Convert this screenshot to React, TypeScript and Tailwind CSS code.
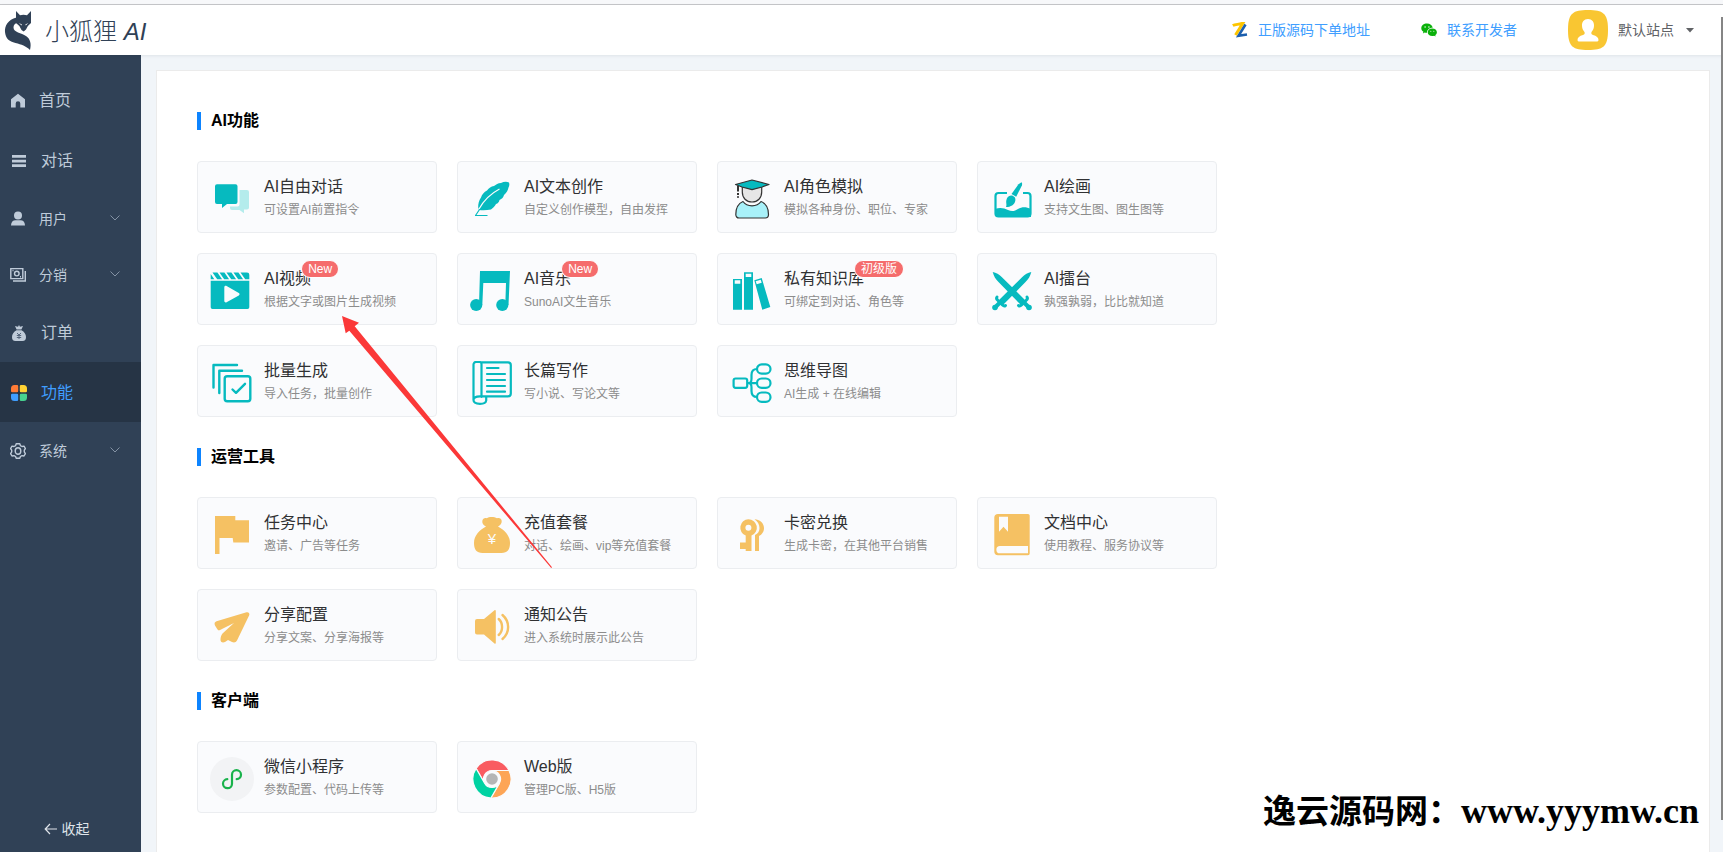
import type { ReactNode } from "react";
import clsx from "clsx";

type Feature = {
  title: string;
  desc: string;
  icon: ReactNode;
  badge?: string;
};

const TEAL = "#06babf";
const AMBER = "#f5c163";
const CARD = "#fafbfd";

/* ---------- Card icons (44 x 44) ---------- */

const Icon = ({ children }: { children: ReactNode }) => (
  <svg viewBox="0 0 44 44" className="size-11" fill="none" aria-hidden="true">
    {children}
  </svg>
);

const ChatIcon = () => (
  <Icon>
    <path
      d="M29.500 13h7.500a2 2 0 0 1 2 2v15.500a2 2 0 0 1-2 2h-3v3.800l-4.500-3.300h-7.500a2 2 0 0 1-2-2v-1.500h7.500a2 2 0 0 0 2-2z"
      fill="#b4ecec"
    />
    <path
      d="M7 7.300h18.500a2 2 0 0 1 2 2V25a2 2 0 0 1-2 2H17l-5 4v-4H7a2 2 0 0 1-2-2V9.300a2 2 0 0 1 2-2z"
      fill={TEAL}
    />
  </Icon>
);

const QuillIcon = () => (
  <Icon>
    <path
      d="M39 5.500c-2.500-1.300-5.500-.8-8 .5-3 .2-5 1.500-7 3-3 .5-5 2-7 4.500-3 1.500-5 4-6 7-2 3-3 6.500-2.800 10l.8 2.500c4 .3 8 .3 12-.5 2-1.500 4-3.500 5-5.500 2-.5 3-2 3.500-4 2.500-1 4-3 4.500-5 2.500-2.500 4-4.500 4.500-7.500 1-1.500 1-3.500.5-5z"
      fill={TEAL}
    />
    <path d="M9 32C14 23 20 17 29.500 12" stroke={CARD} strokeWidth="1.200" />
    <path d="M5.500 38.500 9.500 32.500M5 38.500h12.500" stroke={TEAL} strokeWidth="1.200" />
  </Icon>
);

const GraduateIcon = () => (
  <Icon>
    <g stroke="#333" strokeWidth="1.200" strokeLinejoin="round">
      <path d="M12.300 9v6c0 6 4 10 9.700 10s9.700-4 9.700-10V9z" fill="#e6e6e6" />
      <path
        d="M13 24.500c2 2.800 5 4.300 9 4.300s7-1.500 9-4.300c5 2 7.500 7 7.500 13 0 2-1.200 3.500-3.200 3.500H9c-2 0-3.200-1.500-3.200-3.500 0-6 2.500-11 7.200-13z"
        fill="#a8f1f9"
      />
      <path d="M5.500 7.500 22 3l17 4.500-7 2.500-10 2.700L12 10z" fill={TEAL} />
    </g>
    <path d="M8 9v5.500M8 16v2M8 19.200v1.500" stroke="#333" strokeWidth="2" />
  </Icon>
);

const PaintIcon = () => (
  <Icon>
    <path
      d="M17 16H8.500A3 3 0 0 0 5.500 19v17.500a3 3 0 0 0 3 3h29a3 3 0 0 0 3-3V19a3 3 0 0 0-3-3H33"
      stroke={TEAL}
      strokeWidth="2.200"
    />
    <path d="M5 32c5-2 9-1 13 1 4 2 7 1 10-1 4-2.500 8-2.500 13 0v8H6z" fill={TEAL} />
    <path d="M31.500 5.300c1 1 .7 2.500 0 4l-5.300 10.500-4.700-2.800 7-9.700z" fill={TEAL} />
    <path d="M21 18.500c3 0 5 2.500 4.300 5.200-.8 4-4.500 6.300-9.300 6.300 1-2 0-3.500.2-6 .4-3.300 2.300-5.500 4.800-5.500z" fill={TEAL} />
  </Icon>
);

const VideoIcon = () => (
  <Icon>
    <path
      fillRule="evenodd"
      d="M.7 11.700h38.600v26.500a1.800 1.800 0 0 1-1.800 1.800h-35A1.800 1.800 0 0 1 .7 38.200zM14.300 18.200v13.800c0 1.200 1.200 1.800 2.300 1.200L28.800 26.500c1-.6 1-1.800 0-2.400L16.600 17c-1.100-.6-2.300 0-2.300 1.200z"
      fill={TEAL}
    />
    <path
      d="M.7 10.300V5l3.600 5.300zM2.500 3.500h4.900l4.700 6.800H7.200zM9.500 3.500h4.900l4.700 6.800h-4.900zM16.500 3.500h4.900l4.700 6.800h-4.900zM23.500 3.500h4.900l4.700 6.800h-4.900zM30.500 3.500h6.500a2.300 2.300 0 0 1 2.300 2.300v4.500h-4.100z"
      fill={TEAL}
    />
  </Icon>
);

const MusicIcon = () => (
  <Icon>
    <path d="M10 2h30l-1.500 34h-3.200L36 14H13.300L12.300 36H9z" fill={TEAL} />
    <circle cx="6.200" cy="36" r="6.100" fill={TEAL} />
    <circle cx="32.300" cy="36" r="6.100" fill={TEAL} />
  </Icon>
);

const BooksIcon = () => (
  <Icon>
    <path d="M3 10h9v30.700H3zM14 3.300h9v37.400h-9zM24.300 11.300 31.700 9l8.600 29-8 2.700z" fill={TEAL} />
    <path
      d="M4.700 11.300h5.600v3.400H4.700zM15.700 4.700h5.600V8h-5.600zM25.700 12.300l5-1.600 1 3-5 1.600z"
      fill={CARD}
    />
  </Icon>
);

const Sword = () => (
  <>
    <path d="M2.700 3c3.500.8 6.500 2.300 9 5L36 32l-4.500 4.500L8.500 13C5.500 10 3.700 7 2.700 3z" fill={TEAL} />
    <path d="M28.500 36.500c1 .8 2 .5 3-.5l5-5c1-1 1.200-2 .5-3" stroke={TEAL} strokeWidth="3" strokeLinecap="round" />
    <path d="m34 33.500 5 5" stroke={TEAL} strokeWidth="4" strokeLinecap="round" />
    <circle cx="39" cy="38.500" r="2.800" fill={TEAL} />
  </>
);

const SwordsIcon = () => (
  <Icon>
    <Sword />
    <g transform="matrix(-1 0 0 1 44 0)">
      <Sword />
    </g>
  </Icon>
);

const BatchIcon = () => (
  <Icon>
    <g stroke={TEAL} strokeWidth="2.400" strokeLinecap="round" strokeLinejoin="round">
      <path d="M3.500 26.500V4h23.500M9.300 32V9.700H32" />
      <rect x="14.700" y="15.300" width="25.600" height="25" rx="2.500" />
      <path d="m22.500 28.500 3.500 3.300 9-9" />
    </g>
  </Icon>
);

const ScrollIcon = () => (
  <Icon>
    <g stroke={TEAL} strokeWidth="2.200" strokeLinecap="round" strokeLinejoin="round">
      <path d="M11.500 36V3a2 2 0 0 0-2-2H6a2.500 2.500 0 0 0-2.500 2.500V39M11.500 1.300H38a2.800 2.800 0 0 1 2.800 2.700v28.500a2.800 2.800 0 0 1-2.800 2.800H10c-4 0-6.500 1.500-6.500 3.800 0 2.400 2.500 3.700 6.500 3.700 4.500 0 6-1.300 6.200-3.300V36" />
      <path d="M17 7h11.500M17 13h18M17 19h18M17 25h18M17 30.700h18" />
    </g>
  </Icon>
);

const MindMapIcon = () => (
  <Icon>
    <g stroke={TEAL} strokeWidth="2.200">
      <rect x="3.600" y="17.500" width="13.600" height="9.300" rx="2" />
      <rect x="27" y="3.300" width="13.500" height="9.400" rx="4.700" />
      <rect x="27" y="17.500" width="13.500" height="9.300" rx="4.700" />
      <rect x="27" y="31.500" width="13.500" height="9.400" rx="4.700" />
      <path d="M17 22.100h10M27 8c-3.500 0-5.500 2.500-5.500 6v3.500c0 2.500-1 4.500-2.500 4.600 1.500.1 2.500 2 2.500 4.500V30c0 3.500 2 6 5.500 6" />
    </g>
  </Icon>
);

const FlagIcon = () => (
  <Icon>
    <path d="M5 3h20.300v4.200H39v22.300H23.300l-.6-4.500H9.500v16H5z" fill={AMBER} />
  </Icon>
);

const MoneyBagIcon = () => (
  <Icon>
    <path
      d="M16 13.500c-2.500-1-4-3-3.700-5.500.3-2.300 2.500-3.500 4.500-2.700 2-1.800 7.500-1.800 10.200 0 2.500-.8 4.500.4 4.700 2.700.2 2.500-1.500 4.500-3.700 5.500 6.500 3.500 12 9 12 16.500 0 6.500-2.500 10-8.500 10h-19C6.500 40 4 36.500 4 30c0-7.500 5.500-13 12-16.500z"
      fill={AMBER}
    />
    <text x="22" y="31" textAnchor="middle" fontSize="15" fill={CARD}>
      ¥
    </text>
  </Icon>
);

const KeysIcon = () => (
  <Icon>
    <path d="M24.500 6.200c5 0 9.500 3.800 9.500 9 0 3.300-2 6.300-5 7.800V38h-4V22c3-1.200 4.500-4 4.500-7 0-3.500-2-6.800-5-8.800z" fill={AMBER} />
    <path
      fillRule="evenodd"
      d="M18.400 6.200a8.500 8.500 0 0 1 3.100 16.400V38h-5.800v-2H10v-6.500h5.700v-6.900A8.500 8.500 0 0 1 18.400 6.200zm0 5.600a3 3 0 1 0 0 6 3 3 0 0 0 0-6z"
      fill={AMBER}
    />
  </Icon>
);

const DocIcon = () => (
  <Icon>
    <path d="M8 1h30a1.700 1.700 0 0 1 1.700 1.600v38a1.700 1.700 0 0 1-1.700 1.700H8a3.700 3.700 0 0 1-3.700-3.700v-34A3.700 3.700 0 0 1 8 1z" fill={AMBER} />
    <path d="M9 3.700h9v15l-4.500-5-4.500 5zM10 33h28v7.300H10a3.600 3.600 0 0 1 0-7.300z" fill={CARD} />
  </Icon>
);

const PlaneIcon = () => (
  <Icon>
    <path
      d="M6.500 16.300 36.500 7.300c2-.5 3.500 1 2.700 3L27 35.500c-1 2-3 2.500-5 1.500l-4-2-3 2c-2.500 1.200-4.700 0-4.500-2.500.1-2 .5-4 2-6L24 18 9.500 25.300c-.8.4-1.400 0-2-.7L5 20.500c-1-2-.3-3.600 1.500-4.200z"
      fill={AMBER}
    />
  </Icon>
);

const SpeakerIcon = () => (
  <Icon>
    <path d="M7 14h7L24.500 5.300c.6-.5 1.300-.2 1.300.6v32c0 .8-.7 1-1.300.5L14 29.500H7a2 2 0 0 1-2-2V16a2 2 0 0 1 2-2z" fill={AMBER} />
    <path
      d="M28.700 14c4.500 4 4.500 12 0 16M32.500 10c7.500 6.500 7.500 17.500 0 24"
      stroke={AMBER}
      strokeWidth="2.400"
      strokeLinecap="round"
    />
  </Icon>
);

const MiniProgramIcon = () => (
  <Icon>
    <circle cx="22" cy="22" r="22" fill="#f2f3f5" />
    <path
      d="M17.300 22.200a4.500 4.500 0 1 0 4.700 4.500v-9a4.500 4.500 0 1 1 4.700 4.500"
      stroke="#19b24b"
      strokeWidth="2.200"
      strokeLinecap="round"
    />
  </Icon>
);

const ChromeIcon = () => (
  <Icon>
    <g stroke={CARD} strokeWidth="1.200">
      <path d="M6.100 11.500A19 19 0 0 1 39 13.500H22A8.500 8.500 0 0 0 14.600 26.200z" fill="#f95c61" />
      <path d="M39 13.500A19 19 0 0 1 20.900 41l8.500-14.800A8.500 8.500 0 0 0 22 13.500z" fill="#fda556" />
      <path d="M20.900 41A19 19 0 0 1 6.100 11.500l8.500 14.700a8.500 8.500 0 0 0 14.800 0z" fill="#00d2a2" />
    </g>
    <circle cx="22" cy="22" r="5.800" fill="#b5b5b5" />
  </Icon>
);

/* ---------- Data ---------- */

const sections: { title: string; items: Feature[] }[] = [
  {
    title: "AI功能",
    items: [
      { title: "AI自由对话", desc: "可设置AI前置指令", icon: <ChatIcon /> },
      { title: "AI文本创作", desc: "自定义创作模型，自由发挥", icon: <QuillIcon /> },
      { title: "AI角色模拟", desc: "模拟各种身份、职位、专家", icon: <GraduateIcon /> },
      { title: "AI绘画", desc: "支持文生图、图生图等", icon: <PaintIcon /> },
      { title: "AI视频", desc: "根据文字或图片生成视频", icon: <VideoIcon />, badge: "New" },
      { title: "AI音乐", desc: "SunoAI文生音乐", icon: <MusicIcon />, badge: "New" },
      { title: "私有知识库", desc: "可绑定到对话、角色等", icon: <BooksIcon />, badge: "初级版" },
      { title: "AI擂台", desc: "孰强孰弱，比比就知道", icon: <SwordsIcon /> },
      { title: "批量生成", desc: "导入任务，批量创作", icon: <BatchIcon /> },
      { title: "长篇写作", desc: "写小说、写论文等", icon: <ScrollIcon /> },
      { title: "思维导图", desc: "AI生成 + 在线编辑", icon: <MindMapIcon /> },
    ],
  },
  {
    title: "运营工具",
    items: [
      { title: "任务中心", desc: "邀请、广告等任务", icon: <FlagIcon /> },
      { title: "充值套餐", desc: "对话、绘画、vip等充值套餐", icon: <MoneyBagIcon /> },
      { title: "卡密兑换", desc: "生成卡密，在其他平台销售", icon: <KeysIcon /> },
      { title: "文档中心", desc: "使用教程、服务协议等", icon: <DocIcon /> },
      { title: "分享配置", desc: "分享文案、分享海报等", icon: <PlaneIcon /> },
      { title: "通知公告", desc: "进入系统时展示此公告", icon: <SpeakerIcon /> },
    ],
  },
  {
    title: "客户端",
    items: [
      { title: "微信小程序", desc: "参数配置、代码上传等", icon: <MiniProgramIcon /> },
      { title: "Web版", desc: "管理PC版、H5版", icon: <ChromeIcon /> },
    ],
  },
];

/* ---------- Sidebar ---------- */

const NavIcon = ({ children }: { children: ReactNode }) => (
  <svg viewBox="0 0 16 16" className="size-4 shrink-0" fill="currentColor" aria-hidden="true">
    {children}
  </svg>
);

const HomeIcon = () => (
  <NavIcon>
    <path d="M8 .8 15 6.300V14.500h-4.700V10.500a2.300 2.300 0 0 0-4.600 0v4H1V6.300z" />
  </NavIcon>
);

const ListIcon = () => (
  <NavIcon>
    <path d="M1 2h14v2.700H1zM1 6.700h14v2.700H1zM1 11.300h14V14H1z" />
  </NavIcon>
);

const UserIcon = () => (
  <NavIcon>
    <circle cx="8" cy="4.500" r="4" />
    <path d="M1 14.500c0-3.500 2-5.200 4.500-5.200h5c2.500 0 4.500 1.700 4.500 5.200z" />
  </NavIcon>
);

const MoneyIcon = () => (
  <NavIcon>
    <g fill="none" stroke="currentColor" strokeWidth="1.400">
      <path d="M.8 1.600h12v10H.8zM3 14h12.300V4" />
      <circle cx="6.800" cy="6.600" r="2.300" />
      <path d="M2.500 3.500h1M10 9.700h1" />
    </g>
  </NavIcon>
);

const OrderIcon = () => (
  <NavIcon>
    <path d="M8 0l1 1.700 3-.7-1.600 3.500H5.600L4 1l3 .7zM5.500 5.300h5c2.800 1.500 4.500 4 4.500 6.700 0 2.600-1 4-3.500 4h-7C2 16 1 14.600 1 12c0-2.700 1.700-5.200 4.500-6.700z" />
    <path d="M6 8l2 2 2-2M5.800 10.500h4.400M5.800 12.500h4.400M8 10v4" stroke="#56677d" strokeWidth="1" fill="none" />
  </NavIcon>
);

const AppsIcon = () => (
  <NavIcon>
    <path d="M3.500 0H6a1.200 1.200 0 0 1 1.200 1.200V6A1.200 1.200 0 0 1 6 7.200H1.200A1.200 1.200 0 0 1 0 6V3.500A3.500 3.500 0 0 1 3.500 0z" fill="#ff7b36" />
    <path d="M10 0h2.500A3.500 3.500 0 0 1 16 3.500V6a1.200 1.200 0 0 1-1.200 1.200H10A1.200 1.200 0 0 1 8.800 6V1.200A1.200 1.200 0 0 1 10 0z" fill="#ffd233" />
    <path d="M1.200 8.800H6A1.200 1.200 0 0 1 7.200 10v4.800A1.200 1.200 0 0 1 6 16H3.500A3.500 3.500 0 0 1 0 12.500V10a1.200 1.200 0 0 1 1.200-1.200z" fill="#409eff" />
    <path d="M10 8.800h4.800A1.200 1.200 0 0 1 16 10v2.500a3.500 3.500 0 0 1-3.500 3.500H10a1.200 1.200 0 0 1-1.200-1.200V10A1.200 1.200 0 0 1 10 8.800z" fill="#47d28f" />
  </NavIcon>
);

const SettingIcon = () => (
  <NavIcon>
    <g fill="none" stroke="currentColor" strokeWidth="1.400" strokeLinejoin="round">
      <path d="M6.200.7h3.600l.6 1.900 1.600.9 2-.4 1.400 2.400-1.100 1.700v1.700l1.100 1.700-1.400 2.400-2-.4-1.600.9-.6 1.800H6.200l-.6-1.800-1.600-.9-2 .4L.6 10.600l1.100-1.700V7.200L.6 5.500 2 3.100l2 .4 1.600-.9z" />
      <ellipse cx="8" cy="8" rx="2.800" ry="3.200" />
    </g>
  </NavIcon>
);

const navItems = [
  { label: "首页", icon: <HomeIcon />, kind: "home" },
  { label: "对话", icon: <ListIcon />, kind: "link" },
  { label: "用户", icon: <UserIcon />, kind: "group" },
  { label: "分销", icon: <MoneyIcon />, kind: "group" },
  { label: "订单", icon: <OrderIcon />, kind: "link" },
  { label: "功能", icon: <AppsIcon />, kind: "link", active: true },
  { label: "系统", icon: <SettingIcon />, kind: "group" },
];

const Sidebar = () => (
  <aside className="flex w-[141px] shrink-0 flex-col bg-[#304156] text-[#bfcbd9]">
    <nav className="flex flex-1 flex-col pt-[15px]">
      {navItems.map(({ label, icon, kind, active }) =>
        kind === "group" ? (
          <button
            key={label}
            type="button"
            className="flex h-14 items-center gap-[13px] pt-px pr-5 pl-[10px] text-sm"
          >
            {icon}
            <span className="flex-1 text-left">{label}</span>
            <svg viewBox="0 0 12 12" className="size-3" fill="none" aria-hidden="true">
              <path d="m1.500 2.500 4.500 4.500 4.500-4.500" stroke="#8492a4" />
            </svg>
          </button>
        ) : (
          <a
            key={label}
            href="#"
            className={clsx(
              "flex h-[60px] items-center pt-[2px] text-base",
              kind === "home" ? "gap-[13px] pl-[10px]" : "gap-[14px] pl-[11px]",
              active && "bg-[#263445] text-[#409eff]"
            )}
          >
            {icon}
            {label}
          </a>
        )
      )}
    </nav>
    <button
      type="button"
      className="flex h-12 items-center justify-center gap-1 pt-[2px] pr-2 text-sm text-[#dfe4ea]"
    >
      <svg viewBox="0 0 14 14" className="size-3.5" fill="none" aria-hidden="true">
        <path d="M13 7H1.500M6 2 1.200 7 6 12" stroke="currentColor" strokeWidth="1.200" />
      </svg>
      收起
    </button>
  </aside>
);

/* ---------- Header ---------- */

const FoxLogo = () => (
  <svg viewBox="4 11 30 41" className="h-[41px] w-[30px]" fill="#304156" aria-hidden="true">
    <path d="M16 12l4 4.200q3.300-.7 7 0L31 12v12q-3.500 2.500-5 6.500l-2.300 2-2.200-1.500Q20 26.500 16 24z" />
    <path d="M16.500 18.500C8 20.500 4.500 27 5 33c.7 6.500 4 9.500 10.500 11 6 1.500 10.500 3 14.500 7 1.500-6 .5-11-4-14-4.500-3-12.500-3.500-12.500-8.500 0-2.500 1.500-4 3.500-4.500z" />
    <path d="M19 24l3 1.500-.5 1zM28.300 24l-3 1.500.5 1z" fill="#fff" />
  </svg>
);

const Header = () => (
  <header className="z-10 flex h-[50px] shrink-0 items-center bg-white pr-7 pl-1 shadow-[0_1px_3px_rgba(0,21,41,0.08)]">
    <a href="#" className="flex items-center gap-[11px] text-2xl font-light text-[#304156]">
      <FoxLogo />
      <span className="pt-1">
        小狐狸 <i>AI</i>
      </span>
    </a>
    <div className="ml-auto flex items-center gap-[51px] text-sm">
      <a href="#" className="flex items-center gap-[10px] text-[#409eff]">
        <svg viewBox="0 0 16 16" className="size-4" fill="none" aria-hidden="true">
          <path d="M.8 3.500C4 1.800 7 3 11 1L3.500 13" stroke="#fdc500" strokeWidth="3" />
          <path d="M13.500 2.500 6.500 13.800 15 12.500" stroke="#1c5fae" strokeWidth="2.600" />
        </svg>
        正版源码下单地址
      </a>
      <a href="#" className="flex items-center gap-[10px] text-[#409eff]">
        <svg viewBox="0 0 16 16" className="size-4" aria-hidden="true">
          <path
            d="M6 1.500c3 0 5.300 1.800 5.700 4.200C8.500 5.500 5.800 7.700 6 10.700c-.8.100-1.600 0-2.300-.2L1.900 11.500l.5-1.700C1 8.900.3 7.700.3 6.200.3 3.600 2.800 1.500 6 1.500z"
            fill="#0bb10b"
          />
          <path
            d="M11.300 6.400c2.600 0 4.600 1.700 4.600 3.900 0 1.200-.6 2.200-1.600 2.900l.3 1.400-1.500-.8c-3.500.9-6.400-.9-6.400-3.500 0-2.200 2-3.900 4.600-3.900z"
            fill="#0bb10b"
          />
          <g fill="#fff">
            <circle cx="4.100" cy="5" r=".7" />
            <circle cx="7.900" cy="5" r=".7" />
            <circle cx="9.800" cy="9.200" r=".5" />
            <circle cx="12.800" cy="9.200" r=".5" />
          </g>
        </svg>
        联系开发者
      </a>
      <button type="button" className="flex items-center text-[#606266]">
        <svg viewBox="0 0 40 40" className="mr-[10px] size-10" aria-hidden="true">
          <path
            d="M20 0c15 0 20 3 20 20s-5 20-20 20S0 37 0 20 5 0 20 0z"
            fill="#f9c632"
          />
          <path
            d="M20 9c4 0 6.300 3 6 7-.2 3-1.200 4.500-2.500 6-.5 1.500 0 2.500 1.500 3 3.500 1 5.500 2.500 5.500 5 0 1-1 1.500-2 1.500h-17c-1 0-2-.5-2-1.500 0-2.500 2-4 5.500-5 1.500-.5 2-1.500 1.500-3-1.300-1.500-2.300-3-2.500-6-.3-4 2-7 6-7z"
            fill="#fff"
          />
        </svg>
        默认站点
        <svg viewBox="0 0 10 10" className="ml-[11px] size-2.5" fill="#606266" aria-hidden="true">
          <path d="M1 3h8L5 7.500z" />
        </svg>
      </button>
    </div>
  </header>
);

/* ---------- Content ---------- */

const FeatureCard = ({ title, desc, icon, badge }: Feature) => (
  <a
    href="#"
    className="flex h-[72px] w-60 items-start gap-[10px] rounded border border-[#ebedf0] bg-[#fafbfd] px-3 pt-[13px]"
  >
    <span className="shrink-0 pt-[2px]">{icon}</span>
    <span className="flex flex-col items-start whitespace-nowrap">
      <span className="relative text-base leading-6 text-[#303133]">
        {title}
        {badge && (
          <sup className="absolute -top-[7px] left-full -ml-[10px] h-[18px] rounded-full border border-white bg-[#f56c6c] px-[6px] text-xs leading-4 text-white">
            {badge}
          </sup>
        )}
      </span>
      <span className="text-xs leading-[22px] text-[#8c8c8c]">{desc}</span>
    </span>
  </a>
);

export default function App() {
  return (
    <div className="relative flex h-screen flex-col overflow-hidden bg-[#f1f5f9] font-['Liberation_Sans','Noto_Sans_CJK_SC',sans-serif]">
      <div className="h-[5px] shrink-0 border-b border-[#c6c7ca] bg-[#f7f8fa]" />
      <Header />
      <div className="flex min-h-0 flex-1">
        <Sidebar />
        <main className="min-w-0 flex-1 overflow-hidden pt-[15px] pr-[13px] pl-[15px]">
          <div className="flex min-h-full flex-col gap-[30px] border border-[#ebebeb] bg-white p-10">
            {sections.map(({ title, items }) => (
              <section key={title}>
                <h2 className="mb-[30px] flex items-center gap-[10px] text-base leading-5 font-bold text-black">
                  <span className="h-[18px] w-1 bg-[#0d84ff]" />
                  {title}
                </h2>
                <div className="flex max-w-5xl flex-wrap gap-5">
                  {items.map((item) => (
                    <FeatureCard key={item.title} {...item} />
                  ))}
                </div>
              </section>
            ))}
          </div>
        </main>
      </div>

      {/* Pointer to the video card */}
      <svg
        viewBox="0 0 210 252"
        className="pointer-events-none absolute top-[316px] left-[342px] z-20 h-[252px] w-[210px]"
        aria-hidden="true"
      >
        <path d="M0 0l17 6.700-4.300 3.600L210 251.300l-.8.700L7.300 14.700l-3.600 2.600z" fill="#fb3838" />
      </svg>

      {/* Scrollbar thumb */}
      <div className="absolute top-[17px] right-0 bottom-8 z-20 w-[2px] bg-[#858585]" />

      <p className="absolute right-6 bottom-5 z-20 font-['Liberation_Serif','Noto_Sans_CJK_SC',serif] text-[33px] leading-10 font-bold whitespace-nowrap text-black">
        逸云源码网：<span className="text-4xl leading-10">www.yyymw.cn</span>
      </p>
    </div>
  );
}
